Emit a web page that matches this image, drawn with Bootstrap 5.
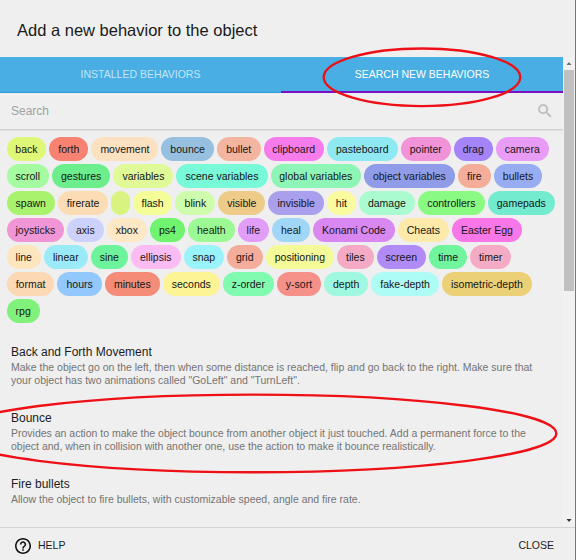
<!DOCTYPE html>
<html lang="en">
<head>
<meta charset="utf-8">
<title>Add a new behavior to the object</title>
<link href="https://cdn.jsdelivr.net/npm/bootstrap@5.3.0/dist/css/bootstrap.min.css" rel="stylesheet">
<style>
body{width:576px;height:560px;overflow:hidden;background:#efefef;font-family:"Liberation Sans",Arial,sans-serif;color:#1c1c1c;font-size:10.5px}
.dialog-frame{width:576px;height:560px;border-right:1px solid #777}
.dialog-head{height:57px;padding:3px 0 0 17px;font-size:16.5px;color:#1a1a1a}
.main-area{height:471px;border-bottom:1px solid #d4d4d4}
.pane{width:563px}
.tab-strip{height:36px;background:#48aee3}
.tab-item{border:0;border-radius:0;padding:0;font-size:10.5px;line-height:35px;color:#c4e5f7;background:none;border-bottom:1px solid #2a9bdb;width:281px}
.tab-item.chosen{width:282px;color:#fff;border-bottom:2px solid #7b0fc4;line-height:34px}
.search-line{height:37px;padding:0 9px 0 11px;border-bottom:1px solid #cfcfcf;box-shadow:0 1px 1px #e3e3e3;color:#a2a2a2;font-size:12px}
.tag-list{padding:6.6px 0 0 6.8px}
.tag-row{height:24px;margin-bottom:3px;gap:3px}
.tag-pill{height:24px;border-radius:12px;line-height:24px;text-align:center;white-space:nowrap;color:#161616;flex:none}
.behavior{height:66px;padding:0 11px}
.behavior-list{padding-top:18px}
.behavior h2{font-size:12px;line-height:16px;margin:0 0 1px;font-weight:400;color:#1c1c1c}
.behavior p{font-size:10.5px;line-height:13.5px;margin:0;color:#747474;white-space:nowrap}
.scroll-rail{width:12px;background:#f1f1f1;padding:0 1px}
.scroll-thumb{height:221px;background:#c0c0c0}
.foot{height:32px;padding:4px 21px 0 15px}
.foot-label{margin-left:7px}
.marks{position:absolute;left:0;top:0;pointer-events:none}
</style>
<script src="https://cdn.jsdelivr.net/npm/bootstrap@5.3.0/dist/js/bootstrap.bundle.min.js"></script>
</head>
<body>
<div class="dialog-frame d-flex flex-column">
  <header class="dialog-head d-flex align-items-center">Add a new behavior to the object</header>
  <main class="main-area d-flex">
    <div class="pane">
      <div class="tab-strip d-flex">
        <button class="tab-item">INSTALLED BEHAVIORS</button>
        <button class="tab-item chosen">SEARCH NEW BEHAVIORS</button>
      </div>
      <div class="search-line d-flex align-items-center justify-content-between">
        <span>Search</span>
        <svg width="18" height="18" viewBox="0 0 24 24" fill="#bababa" stroke="#bababa" stroke-width=".4"><path d="M15.5 14h-.79l-.28-.27A6.47 6.47 0 0 0 16 9.5 6.5 6.5 0 1 0 9.5 16c1.61 0 3.09-.59 4.23-1.57l.27.28v.79l5 4.99L20.49 19l-4.99-5zm-6 0C7.01 14 5 11.99 5 9.5S7.01 5 9.5 5 14 7.01 14 9.5 11.99 14 9.5 14z"/></svg>
      </div>
      <div class="tag-list" id="tags"></div>
      <div class="behavior-list">
        <article class="behavior"><h2>Back and Forth Movement</h2><p>Make the object go on the left, then when some distance is reached, flip and go back to the right. Make sure that<br>your object has two animations called "GoLeft" and "TurnLeft".</p></article>
        <article class="behavior"><h2>Bounce</h2><p>Provides an action to make the object bounce from another object it just touched. Add a permanent force to the<br>object and, when in collision with another one, use the action to make it bounce realistically.</p></article>
        <article class="behavior"><h2>Fire bullets</h2><p>Allow the object to fire bullets, with customizable speed, angle and fire rate.</p></article>
      </div>
    </div>
    <div class="scroll-rail d-flex flex-column">
      <svg width="10" height="13" viewBox="0 0 10 13"><path d="M2.500 8 5 5l2.500 3z" fill="#707070"/></svg>
      <div class="scroll-thumb"></div>
      <svg class="mt-auto" width="10" height="13" viewBox="0 0 10 13"><path d="M2.500 5h5L5 8z" fill="#333"/></svg>
    </div>
  </main>
  <footer class="foot d-flex align-items-center justify-content-between">
    <div class="d-flex align-items-center">
      <svg width="16" height="16" viewBox="2 2 20 20" fill="#111"><path d="M11 18h2v-2h-2v2zm1-16C6.480 2 2 6.480 2 12s4.480 10 10 10 10-4.480 10-10S17.520 2 12 2zm0 18c-4.410 0-8-3.590-8-8s3.590-8 8-8 8 3.590 8 8-3.590 8-8 8zm0-14c-2.210 0-4 1.790-4 4h2c0-1.100.9-2 2-2s2 .9 2 2c0 2-3 1.750-3 5h2c0-2.250 3-2.500 3-5 0-2.210-1.790-4-4-4z"/></svg>
      <span class="foot-label">HELP</span>
    </div>
    <span>CLOSE</span>
  </footer>
</div>
<svg class="marks" width="576" height="560" fill="none" stroke="#ee1016" stroke-width="2.4"><ellipse cx="422" cy="77.300" rx="98.300" ry="28.800"/><ellipse cx="253" cy="433.400" rx="303.300" ry="38.800"/></svg>
<script>
// Each tag: label, right edge in its row, fill colour
const rows = [
 [['back',46.3,'#def776'],['forth',88.6,'#f78272'],['movement',158.6,'#fce1c0'],['bounce',214,'#97c0e0'],['bullet',260.8,'#f3b5a0'],['clipboard',324,'#f67ceb'],['pasteboard',398,'#8fe9f3'],['pointer',451,'#f193d8'],['drag',493,'#a583f8'],['camera',549,'#e99cf5']],
 [['scroll',49,'#a5fba0'],['gestures',110.6,'#6dee8c'],['variables',173.6,'#e1fa98'],['scene variables',267.8,'#78f9d8'],['global variables',361.2,'#8df6b6'],['object variables',455,'#909ce7'],['fire',491.2,'#f5ac98'],['bullets',542.4,'#98acf1']],
 [['spawn',55,'#a8f26e'],['firerate',108.6,'#fcdcb5'],['',130,'#d6f47f'],['flash',172.6,'#f5fd98'],['blink',215.6,'#cffcac'],['visible',265.6,'#eecb89'],['invisible',324.2,'#aa9fec'],['hit',356,'#fafa9f'],['damage',415.2,'#aafbd0'],['controllers',485,'#89fa82'],['gamepads',555,'#73ebcf']],
 [['joysticks',64,'#f096d7'],['axis',104,'#cdd2fd'],['xbox',147,'#fde7c5'],['ps4',185.2,'#70f36e'],['health',234.8,'#9cfa94'],['life',269.2,'#e29df8'],['heal',310.2,'#a0d7f6'],['Konami Code',395,'#d987f1'],['Cheats',449.2,'#fdeaaa'],['Easter Egg',522,'#f877e8']],
 [['line',41,'#fde5bd'],['linear',88,'#9beaf7'],['sine',128,'#6df39c'],['ellipsis',181,'#fabcf3'],['snap',224,'#9bf3fa'],['grid',263,'#f3ad9a'],['positioning',334.2,'#f5fa99'],['tiles',374,'#f4aac5'],['screen',426.2,'#b08bf5'],['time',467.4,'#70f49e'],['timer',511.3,'#f5abc5']],
 [['format',54.6,'#fcd8b5'],['hours',102,'#92c8fb'],['minutes',160,'#f58c77'],['seconds',220,'#fcf495'],['z-order',274,'#80fbaf'],['y-sort',321.3,'#f69189'],['depth',368.5,'#a1f8e1'],['fake-depth',439.2,'#adfcf5'],['isometric-depth',532,'#ebd076']],
 [['rpg',39.8,'#80f17a']]
];
const host = document.getElementById('tags');
rows.forEach(items => {
  const row = document.createElement('div');
  row.className = 'tag-row d-flex';
  let edge = 4;
  items.forEach(([label, end, fill]) => {
    const pill = document.createElement('span');
    pill.className = 'tag-pill';
    pill.textContent = label;
    pill.style.width = (end - edge - 3) + 'px';
    pill.style.backgroundColor = fill;
    edge = end;
    row.append(pill);
  });
  host.append(row);
});
</script>
</body>
</html>
